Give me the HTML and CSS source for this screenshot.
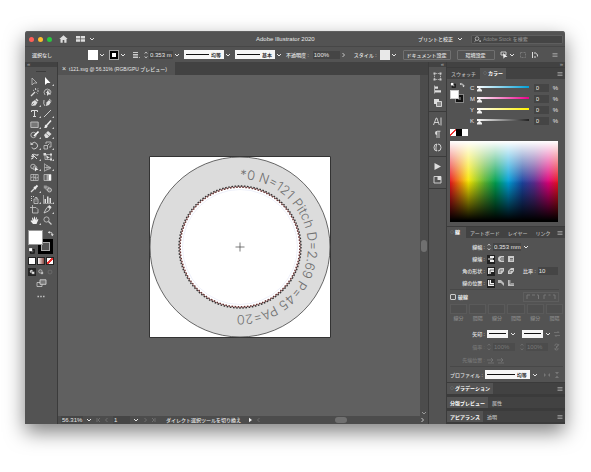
FILE: index.html
```html
<!DOCTYPE html>
<html lang="ja">
<head>
<meta charset="utf-8">
<title>Adobe Illustrator 2020</title>
<link rel="stylesheet" href="styles.css">
</head>
<body>
<svg class="defs" aria-hidden="true">
  <symbol id="chev" viewBox="0 0 6 6"><path d="M1 2l2 2 2-2" fill="none" stroke="currentColor"/></symbol>
  <symbol id="step" viewBox="0 0 4 8"><path d="M.7 2.6L2 1l1.300 1.600M.7 5.400L2 7l1.300-1.600" fill="none" stroke="currentColor" stroke-width=".7"/></symbol>
  <symbol id="menu" viewBox="0 0 6 6"><path d="M.5 1.500h5M.5 3h5M.5 4.500h5" stroke="currentColor" stroke-width=".7"/></symbol>
  <symbol id="prev" viewBox="0 0 5 6"><path d="M3.500 1L1.500 3l2 2" fill="none" stroke="currentColor" stroke-width=".8"/></symbol>
  <symbol id="next" viewBox="0 0 5 6"><path d="M1.500 1l2 2-2 2" fill="none" stroke="currentColor" stroke-width=".8"/></symbol>
  <symbol id="first" viewBox="0 0 5 6"><path d="M1 1v4M4 1L2 3l2 2" fill="none" stroke="currentColor" stroke-width=".8"/></symbol>
  <symbol id="last" viewBox="0 0 5 6"><path d="M4 1v4M1 1l2 2-2 2" fill="none" stroke="currentColor" stroke-width=".8"/></symbol>
  <symbol id="swap" viewBox="0 0 8 8"><path d="M3 1L1 2.700l2 1.700z" fill="currentColor"/><path d="M2 2.700h2q2 0 2 2.300" fill="none" stroke="currentColor"/><path d="M4.300 4.800h3.400L6 7z" fill="currentColor"/></symbol>
  <symbol id="default" viewBox="0 0 8 8"><rect x="3" y="3" width="4" height="4" fill="none" stroke="#111" stroke-width="1.300"/><rect x="1" y="1" width="4" height="4" fill="#fff" stroke="#222" stroke-width=".5"/></symbol>
  <symbol id="link" viewBox="0 0 6 8"><path d="M1 3V2q0-1 1.500-1T4 2v1M1 5v1q0 1 1.500 1T4 6V5M2.500 3v2M5 1L1 7" fill="none" stroke="currentColor" stroke-width=".8"/></symbol>
</svg>

<div class="window">
  <header class="titlebar">
    <div class="title-left">
      <span class="light close"></span><span class="light minimize"></span><span class="light maximize"></span>
      <button class="plain home" aria-label="ホーム"><svg viewBox="0 0 9 8"><path d="M4.500.3L.3 4h1.200v3.700h2.200V5h1.600v2.700h2.200V4h1.200z" fill="#ddd"/></svg></button>
      <button class="plain arrange" aria-label="ドキュメントの配置"><svg viewBox="0 0 9 6"><path d="M0 0h4v2.500H0zM0 3.200h4v2.600H0zM4.700 0H9v2.500H4.700zM4.700 3.200H9v2.600H4.700z" fill="#ddd"/></svg></button>
      <svg class="chev"><use href="#chev"/></svg>
    </div>
    <h1>Adobe Illustrator 2020</h1>
    <div class="title-right">
      <button class="plain">プリントと校正</button>
      <svg class="chev"><use href="#chev"/></svg>
      <label class="search">
        <svg viewBox="0 0 8 8"><circle cx="3.500" cy="3" r="2.100" fill="none" stroke="#ccc" stroke-width=".8"/><path d="M2 4.600L.5 7M6 5.500h2L7 6.700z" stroke="#ccc" stroke-width=".6" fill="#ccc"/></svg>
        <input type="search" aria-label="Adobe Stock を検索" placeholder="Adobe Stock を検索">
      </label>
    </div>
  </header>

  <div class="control">
    <span class="selection">選択なし</span>
    <div class="group">
      <button class="swatch white" aria-label="塗り"></button><svg class="chev"><use href="#chev"/></svg>
    </div>
    <div class="group">
      <button class="swatch ring" aria-label="線"></button><svg class="chev"><use href="#chev"/></svg>
    </div>
    <div class="group weight">
      <svg class="ico" viewBox="0 0 8 8"><path d="M1 1h5v1H1zM1 3h5v1.500H1zM1 5.500h5V7H1z" fill="#ccc"/><path d="M7 6.500h.8" stroke="#ccc"/></svg>
      <svg class="step"><use href="#step"/></svg>
      <input class="field wide" aria-label="線幅" value="0.353 m"><svg class="chev"><use href="#chev"/></svg>
    </div>
    <div class="group">
      <label class="line-select"><span class="line"></span><select aria-label="プロファイル"><option>均等</option></select></label><svg class="chev"><use href="#chev"/></svg>
    </div>
    <div class="group">
      <label class="line-select"><span class="line"></span><select aria-label="ブラシ"><option>基本</option></select></label><svg class="chev"><use href="#chev"/></svg>
    </div>
    <div class="group">
      <label for="opacity">不透明度 :</label><input class="field opacity" id="opacity" value="100%"><svg class="arrow"><use href="#next"/></svg>
    </div>
    <div class="group styles">
      <span>スタイル :</span><button class="swatch style" aria-label="スタイル"></button><svg class="chev"><use href="#chev"/></svg>
    </div>
    <div class="group actions">
      <button class="outlined">ドキュメント設定</button>
      <button class="outlined">環境設定</button>
    </div>
    <div class="group tail">
      <svg class="ico" viewBox="0 0 8 8"><path d="M1 1h5v3H1z" fill="none" stroke="#ccc"/><path d="M3 2l4.500 4H5L3.500 7.800z" fill="#eee"/></svg><svg class="chev"><use href="#chev"/></svg>
    </div>
    <svg class="ico dim" viewBox="0 0 8 8"><path d="M1.500 1.500h5v5h-5z" fill="none" stroke="currentColor" stroke-dasharray="2 1"/></svg>
    <svg class="ico" viewBox="0 0 8 8"><path d="M1.500 1v6M3 2h2M3 6h2" stroke="#ddd"/><path d="M5 2.500q2 .5 1.500 3" fill="none" stroke="#ddd"/></svg>
    <svg class="ico menu"><use href="#menu"/></svg>
  </div>

  <main class="work">
    <aside class="tools">
      <div class="strip left">«</div>
      <div class="grip"></div>
      <div class="tool-grid">
        <button class="plain" aria-label="選択"><svg viewBox="0 0 9 9"><path d="M2 1v7l2-2h3z" fill="none" stroke="#ccc" stroke-width=".7"/></svg></button>
        <button class="plain more" aria-label="ダイレクト選択"><svg viewBox="0 0 9 9"><path d="M2 0v8l2.300-2H7.500z" fill="#fff"/></svg></button>
        <button class="plain" aria-label="自動選択"><svg viewBox="0 0 9 9"><path d="M1 8l4-4" stroke="#ddd" stroke-width="1.300"/><path d="M5.500 0v2M7 3h2M7 1.500L8 .5M3 2l1 .7M6.500 4.500l1 1" stroke="#ddd" stroke-width=".8"/></svg></button>
        <button class="plain" aria-label="なげなわ"><svg viewBox="0 0 9 9"><path d="M2 7Q0 4 2 2t5 0q2 2 0 4M3 5q2-3 4-2" fill="none" stroke="#ccc" stroke-width=".8"/><path d="M4 2v6l1.500-1.500H8z" fill="#ddd"/></svg></button>
        <button class="plain more" aria-label="ペン"><svg viewBox="0 0 9 9"><path d="M1 8l1-4 3-2 2.500 2.500-2 3z" fill="#ddd"/><path d="M5.500 1.500l1-1 2 2-1 1z" fill="#ddd"/><path d="M1 8l3-3" stroke="#555" stroke-width=".6"/></svg></button>
        <button class="plain" aria-label="曲線"><svg viewBox="0 0 9 9"><path d="M3 8l.5-3.500L6 2l2 2-2 3z" fill="#ddd"/><path d="M1 2q-1 4 1 6M6 1l2.500 2" fill="none" stroke="#ddd" stroke-width=".8"/></svg></button>
        <button class="plain more" aria-label="文字"><svg viewBox="0 0 9 9"><path d="M1.500 3V1.500h6V3M4.500 1.500v6M3 7.500h3" fill="none" stroke="#ddd"/></svg></button>
        <button class="plain more" aria-label="直線"><svg viewBox="0 0 9 9"><path d="M1 8l7-7" stroke="#ccc"/></svg></button>
        <button class="plain more" aria-label="長方形"><svg viewBox="0 0 9 9"><path d="M.8 2h7.400v5.500H.8z" fill="#777" stroke="#ccc" stroke-width=".8"/></svg></button>
        <button class="plain more" aria-label="ブラシ"><svg viewBox="0 0 9 9"><path d="M8 .5L4 5" stroke="#eee" stroke-width="1.500"/><path d="M3 4.500q2 0 1.500 2T1 8q1-1 .8-2T3 4.500z" fill="#eee"/></svg></button>
        <button class="plain more" aria-label="Shaper"><svg viewBox="0 0 9 9"><circle cx="3.500" cy="5" r="2.700" fill="none" stroke="#ccc" stroke-width=".8"/><path d="M8.500 1.500L4 6" stroke="#fff" stroke-width="1.600"/></svg></button>
        <button class="plain more" aria-label="消しゴム"><svg viewBox="0 0 9 9"><path d="M1 5l4-4 3.500 3-4 4h-2z" fill="#ddd"/><path d="M2.800 3.200l3.500 3" stroke="#555" stroke-width=".6"/></svg></button>
        <button class="plain more" aria-label="回転"><svg viewBox="0 0 9 9"><path d="M2 2.500a3.200 3.200 0 1 1-.3 4" fill="none" stroke="#ccc"/><path d="M.5 1v3h3z" fill="#ccc"/></svg></button>
        <button class="plain more" aria-label="拡大・縮小"><svg viewBox="0 0 9 9"><path d="M1 4.500h3.500V8H1zM3 3V1h5v5H6M4.500 4.500l2-2" fill="none" stroke="#ccc" stroke-width=".8"/></svg></button>
        <button class="plain more" aria-label="線幅"><svg viewBox="0 0 9 9"><path d="M1 7q3 0 2-3T6 3q3 1 2-1M2 2l5 5M1 4l3 1" fill="none" stroke="#ddd"/></svg></button>
        <button class="plain more" aria-label="自由変形"><svg viewBox="0 0 9 9"><path d="M2 2.500h6v5H2z" fill="none" stroke="#ccc" stroke-width=".7"/><path d="M.5 1h2.500v2.500H.5zM7 1.500h2v2H7zM7 6.500h2v2H7zM3 3l4 3H5L4 7.500z" fill="#ddd"/></svg></button>
        <button class="plain more" aria-label="シェイプ形成"><svg viewBox="0 0 9 9"><circle cx="3" cy="3.500" r="2.300" fill="none" stroke="#ccc" stroke-width=".8"/><circle cx="5" cy="5" r="2" fill="#777" stroke="#ccc" stroke-width=".6"/><path d="M5 4v4.500L6.500 7h2z" fill="#eee"/></svg></button>
        <button class="plain more" aria-label="遠近グリッド"><svg viewBox="0 0 9 9"><path d="M1.500.5v8M4 2v5M6 3.500v3M1.500 1L8 5M1.500 4.500H8M1.500 8L8 5" fill="none" stroke="#bbb" stroke-width=".7"/></svg></button>
        <button class="plain" aria-label="メッシュ"><svg viewBox="0 0 9 9"><path d="M.8 1.500h7.400v6H.8zM1 4.500q2-1 3.500 0t3.500 0M3.500 1.500q1 3 0 6M6 1.500q-1 3 0 6" fill="none" stroke="#ccc" stroke-width=".7"/></svg></button>
        <button class="plain" aria-label="グラデーション"><svg viewBox="0 0 9 9"><path d="M1 1.500h2.500v6H1z" fill="#666"/><path d="M3.500 1.500H6v6H3.500z" fill="#aaa"/><path d="M6 1.500h2v6H6z" fill="#fff"/><path d="M1 1.500h7v6H1z" fill="none" stroke="#ddd" stroke-width=".6"/></svg></button>
        <button class="plain more" aria-label="スポイト"><svg viewBox="0 0 9 9"><path d="M1 8l4-4" stroke="#ddd" stroke-width="1.300"/><path d="M4 3l2 2M5.500 3.500L7.500 1.500" stroke="#eee" stroke-width="1.800"/></svg></button>
        <button class="plain" aria-label="ブレンド"><svg viewBox="0 0 9 9"><path d="M.8 1.500h3v3h-3z" fill="#999"/><circle cx="4.500" cy="4.500" r="1.800" fill="#777" stroke="#bbb" stroke-width=".6"/><circle cx="6.500" cy="6" r="2" fill="#777" stroke="#ddd" stroke-width=".7"/></svg></button>
        <button class="plain more" aria-label="シンボルスプレー"><svg viewBox="0 0 9 9"><path d="M4 4h4v4.500H4zM5 2.500h2V4" fill="none" stroke="#ccc" stroke-width=".8"/><path d="M1 1h1v1H1zM3 1h1v1H3zM1 3h1v1H1zM1 5h1v1H1zM5.500 5.500h1v1h-1z" fill="#ccc"/></svg></button>
        <button class="plain more" aria-label="グラフ"><svg viewBox="0 0 9 9"><path d="M.5 0v8.500H9" fill="none" stroke="#ccc" stroke-width=".6"/><path d="M1.500 4H3v4H1.500zM4 1.500h1.500V8H4zM6.500 3H8v5H6.500z" fill="#ddd"/></svg></button>
        <button class="plain" aria-label="アートボード"><svg viewBox="0 0 9 9"><path d="M2.500 0v2.500M0 2.500h6l2 2V8H2.500V2.500" fill="none" stroke="#ccc" stroke-width=".8"/></svg></button>
        <button class="plain more" aria-label="スライス"><svg viewBox="0 0 9 9"><path d="M1 8l2-4 3-3.500L8 2 5.500 6z" fill="none" stroke="#ddd" stroke-width=".8"/><path d="M4.500 2l2.500 2L8.500 2 6.500.5z" fill="#ddd"/></svg></button>
        <button class="plain more" aria-label="手のひら"><svg viewBox="0 0 9 9"><path d="M3 8L.5 5l.7-.7L2.500 5 2 1.700l.8-.2L3.800 4 4 .8h.8L5.200 4l1-2.700.8.200L6.500 4.500l1.200-1.500.7.500L6.500 8z" fill="#eee"/></svg></button>
        <button class="plain" aria-label="ズーム"><svg viewBox="0 0 9 9"><circle cx="3.500" cy="3.500" r="2.600" fill="none" stroke="#ccc" stroke-width=".8"/><path d="M5.500 5.500l3 3" stroke="#ccc" stroke-width="1.200"/></svg></button>
      </div>
      <div class="fill-stroke">
        <button class="plain big-stroke" aria-label="線の色"></button>
        <button class="plain big-fill" aria-label="塗りの色"></button>
        <button class="plain swap" aria-label="入れ替え"><svg><use href="#swap"/></svg></button>
        <button class="plain reset" aria-label="初期設定"><svg><use href="#default"/></svg></button>
      </div>
      <div class="modes">
        <button class="mode solid" aria-label="カラー"></button>
        <button class="mode grad" aria-label="グラデーション"></button>
        <button class="mode none" aria-label="なし"></button>
      </div>
      <div class="modes">
        <button class="mode on" aria-label="標準描画"><svg viewBox="0 0 7 7"><circle cx="2.800" cy="2.800" r="1.800" fill="#ccc"/><path d="M3 3h3.500v3H3z" fill="#eee" stroke="#222" stroke-width=".5"/></svg></button>
        <button class="mode" aria-label="背面描画"><svg viewBox="0 0 7 7"><path d="M3.500 3.500H6V6H3.500z" fill="#bbb"/><circle cx="2.800" cy="2.800" r="2" fill="#666" stroke="#ccc" stroke-width=".8"/></svg></button>
        <button class="mode" aria-label="内側描画"><svg viewBox="0 0 7 7"><circle cx="3.500" cy="3.500" r="2.300" fill="none" stroke="#777" stroke-width=".7"/></svg></button>
      </div>
      <button class="plain screen" aria-label="スクリーンモード"><svg viewBox="0 0 11 8"><path d="M1 3.500h5v4H1z" fill="none" stroke="#ccc" stroke-width=".8"/><path d="M4 .8h6v4.500H4z" fill="#777" stroke="#ddd" stroke-width=".8"/></svg></button>
      <button class="plain dots" aria-label="ツールバーを編集"><svg viewBox="0 0 8 3"><path d="M.5.8h1.400v1.400H.5zM3.300.8h1.400v1.400H3.300zM6.100.8h1.400v1.400H6.100z" fill="#ccc"/></svg></button>
    </aside>

    <section class="document">
      <div class="doc-tabs"><div class="doc-tab"><button class="plain" aria-label="閉じる">×</button><span>t121.svg @ 56.31% (RGB/GPU プレビュー)</span></div></div>
      <div class="view">
        <div class="canvas">
          <svg class="art" viewBox="0 0 182 182">
            <path d="M.5.5h181v181H.5z" fill="#fff" stroke="#333" stroke-width="1"/>
            <circle cx="91" cy="91" r="90" fill="#dcdcdc" stroke="#444" stroke-width=".8"/>
            <circle cx="91" cy="91" r="60.500" fill="#fff"/>
            <circle cx="91" cy="91" r="60.500" fill="none" stroke="#a77" stroke-width=".6"/>
            <circle class="teeth outer" cx="91" cy="91" r="61" pathLength="242"/>
            <circle class="teeth inner" cx="91" cy="91" r="59.800" pathLength="242"/>
            <circle cx="91" cy="91" r="57.500" fill="none" stroke="#e6eaf8" stroke-width=".7"/>
            <path d="M86.500 91h9M91 86.500v9" stroke="#444" stroke-width=".7"/>
            <path id="ring" d="M91 23a68 68 0 0 1 0 136a68 68 0 0 1-68-68" fill="none"/>
            <text class="engrave"><textPath href="#ring">*0 N=121 Pitch D=2.69 P=45 PA=20</textPath></text>
          </svg>
        </div>
        <div class="vscroll"><span></span><i class="thumb"></i><svg><use href="#chev"/></svg></div>
      </div>
      <footer class="status">
        <input class="field zoom" aria-label="ズーム" value="56.31%"><svg class="chev"><use href="#chev"/></svg>
        <div class="pager dim"><svg><use href="#first"/></svg><svg><use href="#prev"/></svg></div>
        <input class="field page" aria-label="アートボード" value="1"><svg class="chev"><use href="#chev"/></svg>
        <div class="pager dim"><svg><use href="#next"/></svg><svg><use href="#last"/></svg></div>
        <span class="hint">ダイレクト選択ツールを切り換え</span>
        <svg class="play" viewBox="0 0 5 6"><path d="M1 .8L4 3 1 5.200z" fill="#eee"/></svg>
        <svg class="play dim"><use href="#prev"/></svg>
        <div class="hscroll"><i></i></div>
        <svg class="play"><use href="#next"/></svg>
      </footer>
    </section>

    <nav class="dock">
      <div class="strip">«</div>
      <div class="dock-group">
        <button class="plain" aria-label="変形"><svg viewBox="0 0 9 9"><path d="M1.500 1.500h6v6h-6z" fill="none" stroke="#ccc" stroke-width=".8" stroke-dasharray="1 .7"/><path d="M.5.5h2v2h-2zM6.500.5h2v2h-2zM.5 6.500h2v2h-2zM6.500 6.500h2v2h-2z" fill="#ccc"/></svg></button>
        <button class="plain" aria-label="整列"><svg viewBox="0 0 9 9"><path d="M1.500.5v8" stroke="#ccc" stroke-width=".8"/><path d="M2 1.500h3v2.300H2zM2 5.200h6v2.300H2z" fill="#ddd"/></svg></button>
        <button class="plain" aria-label="パスファインダー"><svg viewBox="0 0 9 9"><path d="M1 1h5v5H1z" fill="#ddd"/><path d="M3.500 3.500h5v5h-5z" fill="#888" stroke="#eee" stroke-width=".8"/></svg></button>
      </div>
      <div class="dock-group">
        <button class="plain" aria-label="文字"><svg viewBox="0 0 9 9"><path d="M.5 8L3.200 1h.6L6.300 8M1.500 5.500h4M8 .5v8" fill="none" stroke="#ddd" stroke-width=".9"/></svg></button>
        <button class="plain" aria-label="段落"><svg viewBox="0 0 9 9"><path d="M4 5a2 2 0 0 1 0-4z" fill="#ddd"/><path d="M7.500 1.200H4V8M6 1v7" fill="none" stroke="#ddd" stroke-width=".8"/></svg></button>
        <button class="plain" aria-label="OpenType"><svg viewBox="0 0 9 9"><path d="M4 1Q1 1 1 4.500T4 8Q2.500 6.500 3 4T4 1zM5 1q3 0 3 3.500T5 8" fill="none" stroke="#ddd" stroke-width=".9"/></svg></button>
      </div>
      <div class="dock-group">
        <button class="plain" aria-label="アクション"><svg viewBox="0 0 9 9"><path d="M1.500 1L8 4.500 1.500 8z" fill="#ddd"/></svg></button>
        <button class="plain" aria-label="書き出し"><svg viewBox="0 0 9 9"><path d="M1 1.500h7V8H1z" fill="none" stroke="#ccc"/><path d="M4.500 1v4H8V1z" fill="#ddd"/></svg></button>
      </div>
    </nav>

    <aside class="panels">
      <div class="strip right">»</div>
      <div class="tabs"><button class="tab">スウォッチ</button><button class="tab on"><small>◇</small>カラー</button><svg class="menu"><use href="#menu"/></svg></div>
      <section class="color">
        <div class="mixer">
          <div class="mini">
            <svg class="mini-def"><use href="#default"/></svg><svg class="mini-swap"><use href="#swap"/></svg>
            <span class="mini-stroke"></span><span class="mini-fill"></span>
          </div>
          <div class="rows">
            <div class="cmyk cyan"><label for="c">C</label><input type="range" aria-label="C" value="0"><input class="field" id="c" value="0"><span>%</span></div>
            <div class="cmyk magenta"><label for="m">M</label><input type="range" aria-label="M" value="0"><input class="field" id="m" value="0"><span>%</span></div>
            <div class="cmyk yellow"><label for="y">Y</label><input type="range" aria-label="Y" value="0"><input class="field" id="y" value="0"><span>%</span></div>
            <div class="cmyk black"><label for="k">K</label><input type="range" aria-label="K" value="0"><input class="field" id="k" value="0"><span>%</span></div>
          </div>
        </div>
        <div class="chips"><button class="chip none" aria-label="なし"></button><button class="chip blk" aria-label="ブラック"></button><button class="chip wht" aria-label="ホワイト"></button></div>
        <div class="spectrum"></div>
      </section>

      <div class="tabs stroke-tabs"><button class="tab on"><small>◇</small>線</button><button class="tab">アートボード</button><button class="tab">レイヤー</button><button class="tab">リンク</button><svg class="menu"><use href="#menu"/></svg></div>
      <section class="stroke">
        <div class="row"><label for="w">線幅 :</label><svg class="step"><use href="#step"/></svg><input class="field mm" id="w" value="0.353 mm"><svg class="chev"><use href="#chev"/></svg></div>
        <div class="row"><span class="label">線端 :</span>
          <button class="opt on" aria-label="線端なし"><svg viewBox="0 0 8 8"><path d="M3 1h4v2H3zM3 5h4v2H3zM1 3.500h5v1H1z" fill="#eee"/></svg></button>
          <button class="opt" aria-label="丸型線端"><svg viewBox="0 0 8 8"><path d="M7 1H4a3 3 0 0 0 0 6h3V5.500H4v-3h3zM3 3.500h4v1H3z" fill="#ccc"/></svg></button>
          <button class="opt" aria-label="突出線端"><svg viewBox="0 0 8 8"><path d="M1 1h6v6H1z" fill="#ccc"/><path d="M3 3.500h3M3 5h3" stroke="#555" stroke-width=".8"/></svg></button></div>
        <div class="row"><span class="label">角の形状 :</span>
          <button class="opt on" aria-label="マイター結合"><svg viewBox="0 0 8 8"><path d="M1 1h6v4H4v2H1z" fill="#eee"/><path d="M3 7V3h4" fill="none" stroke="#333" stroke-width=".7"/></svg></button>
          <button class="opt" aria-label="ラウンド結合"><svg viewBox="0 0 8 8"><path d="M1 7V4q0-3 3-3h3v3L4.500 7z" fill="#ccc"/><path d="M3 6V3h3" fill="none" stroke="#555" stroke-width=".7"/></svg></button>
          <button class="opt" aria-label="ベベル結合"><svg viewBox="0 0 8 8"><path d="M1 7V4l3-3h3v3L4.500 7z" fill="#ccc"/><path d="M3 6V3.500h3" fill="none" stroke="#555" stroke-width=".7"/></svg></button>
          <label class="ratio" for="ratio">比率 :</label><input class="field ten" id="ratio" value="10"></div>
        <div class="row"><span class="label">線の位置 :</span>
          <button class="opt on" aria-label="中央"><svg viewBox="0 0 8 8"><path d="M1 1h3v3h3v3H1z" fill="#eee"/><path d="M2.500 1v4.500H7" fill="none" stroke="#333" stroke-width=".6"/></svg></button>
          <button class="opt" aria-label="内側"><svg viewBox="0 0 8 8"><path d="M1 1h3l3 3v3L4 4H1z" fill="#bbb"/></svg></button>
          <button class="opt" aria-label="外側"><svg viewBox="0 0 8 8"><path d="M1 1h2.500v3H7v3H1z" fill="#bbb"/><path d="M3 1v4h4" fill="none" stroke="#555" stroke-width=".6"/></svg></button></div>
        <div class="dash-head"><label><input type="checkbox">破線</label>
          <span class="dash-style"><svg viewBox="0 0 34 8"><path d="M3 6V2h3M8 2h3M13 2h1.500v4M20 6V2h2M24.500 2h2M29 2h2v4" fill="none" stroke="currentColor"/></svg></span></div>
        <div class="dashes">
          <label><input disabled>線分</label><label><input disabled>間隔</label><label><input disabled>線分</label><label><input disabled>間隔</label><label><input disabled>線分</label><label><input disabled>間隔</label>
        </div>
        <div class="row tall"><span class="label">矢印 :</span>
          <button class="arrowhead" aria-label="始点の矢印"></button><svg class="chev"><use href="#chev"/></svg>
          <button class="arrowhead second" aria-label="終点の矢印"></button><svg class="chev"><use href="#chev"/></svg>
          <svg class="end dim" viewBox="0 0 6 8"><path d="M0 2.500h5L3.500 1M6 5.500H1L2.500 7" fill="none" stroke="currentColor" stroke-width=".8"/></svg></div>
        <div class="row tall dim"><label for="s1">倍率 :</label><svg class="step"><use href="#step"/></svg><input class="field pct" id="s1" value="100%" disabled><svg class="step"><use href="#step"/></svg><input class="field pct" aria-label="終点の倍率" value="100%" disabled><svg class="end"><use href="#link"/></svg></div>
        <div class="row tall dim"><span class="label">先端位置 :</span>
          <button class="opt" aria-label="先端の外"><svg viewBox="0 0 8 8"><path d="M0 4h6M4 2l2 2-2 2M1 7h6" fill="none" stroke="currentColor" stroke-width=".8"/></svg></button>
          <button class="opt" aria-label="先端に合わせる"><svg viewBox="0 0 8 8"><path d="M0 4h6M4 2l2 2-2 2M1 7h6" fill="none" stroke="currentColor" stroke-width=".8"/></svg></button></div>
        <div class="profile"><span>プロファイル :</span><label class="line-select"><span class="line"></span><select aria-label="プロファイル"><option>均等</option></select></label><svg class="chev"><use href="#chev"/></svg>
          <svg class="flip dim" viewBox="0 0 8 8"><path d="M1 2v4l2-2zM7 2v4L5 4z" fill="currentColor"/></svg><svg class="end dim" viewBox="0 0 6 8"><path d="M1 1h4L3 3.500zM1 7h4L3 4.500z" fill="currentColor"/></svg></div>
      </section>
      <div class="tabs closed"><button class="tab on"><small>◇</small>グラデーション</button><svg class="menu"><use href="#menu"/></svg></div>
      <div class="tabs closed"><button class="tab on">分版プレビュー</button><button class="tab">属性</button></div>
      <div class="tabs closed"><button class="tab on">アピアランス</button><button class="tab">透明</button><svg class="menu"><use href="#menu"/></svg></div>
    </aside>
  </main>
</div>
</body>
</html>
```
FILE: styles.css
```css
* { box-sizing: border-box; }

:root {
  --panel: #535353;
  --dark: #424242;
  --edge: #3b3b3b;
  --text: #e6e6e6;
  --muted: #777;
}

body {
  margin: 0;
  min-height: 100vh;
  display: flex;
  padding: 31px 26px 48px 25px;
  background: #fff;
  color: var(--text);
  font: 500 5px/8px "Liberation Sans", "Noto Sans CJK JP", sans-serif;
  white-space: nowrap;
}

button, input, select { font: inherit; color: inherit; margin: 0; padding: 0; border: 0; border-radius: 0; }
svg { display: block; flex: none; }
.defs { position: absolute; width: 0; height: 0; }
.plain { background: none; display: flex; align-items: center; justify-content: center; }
.dim { color: var(--muted); }
.chev { width: 6px; height: 6px; }
.step { width: 4px; height: 8px; }
.ico { width: 8px; height: 8px; }
.menu { width: 6px; height: 6px; color: #aaa; }

.window {
  flex: 1;
  min-width: 0;
  display: flex;
  flex-direction: column;
  background: var(--panel);
  border-radius: 3px 3px 0 0;
  box-shadow: 0 8px 20px rgba(0, 0, 0, .5);
}

/* Title bar */
.titlebar {
  display: grid;
  grid-template-columns: 12fr auto 13fr;
  align-items: center;
  height: 15px;
  border-top: 1px solid #606060;
  border-radius: 3px 3px 0 0;
}
.titlebar h1 { margin: 0; font-size: 6px; font-weight: 400; }
.title-left, .title-right { display: flex; align-items: center; }
.title-left { padding-left: 4px; gap: 4px; }
.title-right { justify-content: flex-end; padding-right: 2px; gap: 4px; }
.light { width: 5px; height: 5px; border-radius: 50%; }
.close { background: #ff5f57; }
.minimize { background: #febc2e; }
.maximize { background: #28c840; }
.home { margin-left: 3px; }
.home svg { width: 9px; height: 8px; }
.arrange { margin-left: 4px; }
.arrange svg { width: 9px; height: 6px; }
.search {
  display: flex;
  align-items: center;
  gap: 2px;
  width: 92px;
  height: 9px;
  margin-left: 4px;
  padding-left: 2px;
  border: 1px solid #5e5e5e;
  border-radius: 1px;
  background: #454545;
}
.search svg { width: 7px; height: 7px; }
.search input { flex: 1; min-width: 0; height: 7px; background: none; appearance: none; }
.search input::placeholder { color: #8d8d8d; opacity: 1; }

/* Control bar */
.control {
  display: flex;
  align-items: center;
  gap: 4px;
  height: 16px;
  padding: 0 7px;
  border-top: 1px solid #474747;
}
.selection { width: 52px; }
.group { display: flex; align-items: center; gap: 1px; }
.swatch { width: 10px; height: 10px; }
.white { background: #fff; }
.style { background: #e8e8e8; margin-left: 2px; }
.ring { background: #fff; border: 3px solid #000; outline: 1px solid #aaa; outline-offset: -1px; }
.weight { margin-left: 2px; }
.weight .step { margin-left: 3px; }
.field { height: 8px; padding-left: 1px; background: #454545; font-size: 6px; }
.wide { width: 24px; }
.opacity { width: 27px; margin-left: 3px; }
.arrow { width: 5px; height: 6px; }
.styles { margin-left: 4px; }
.line-select {
  display: flex;
  align-items: center;
  justify-content: space-between;
  width: 40px;
  height: 9px;
  padding: 0 2px;
  background: #f6f6f6;
  color: #222;
}
.line { flex: 1; height: 1px; background: #111; margin-right: 2px; }
.line-select select { appearance: none; background: none; height: 8px; line-height: 8px; }
.actions { gap: 6px; margin-left: 2px; }
.outlined {
  min-width: 38px;
  height: 10px;
  padding: 0 3px;
  border: 1px solid #707070;
  border-radius: 1px;
  background: none;
  line-height: 8px;
}
.tail { margin-left: 1px; }
.control > .menu { width: 6px; margin-left: auto; }

/* Workspace */
.work {
  flex: 1;
  min-height: 0;
  display: grid;
  grid-template-columns: 32px minmax(0, 1fr) 17px 118px;
  column-gap: 1px;
  background: var(--edge);
}
.strip { height: 5px; padding: 0 2px; background: var(--dark); color: #aaa; font-size: 6px; line-height: 4px; text-align: right; }
.strip.left { text-align: left; }

/* Tools */
.tools { background: var(--panel); }
.grip { width: 10px; height: 1px; margin: 4px auto; background: #3c3c3c; }
.tool-grid {
  display: grid;
  grid-template: repeat(14, 1fr) / 13px 13px;
  justify-content: center;
  height: 150px;
}
.tool-grid button { position: relative; }
.tool-grid svg { width: 9px; height: 9px; }
.more::after {
  content: "";
  position: absolute;
  right: 0;
  bottom: 1px;
  border: 1px solid transparent;
  border-right-color: #ccc;
  border-bottom-color: #ccc;
}
.fill-stroke { position: relative; width: 26px; height: 25px; margin: 4px auto 2px; }
.fill-stroke button { position: absolute; }
.fill-stroke svg { width: 7px; height: 7px; }
.big-fill { left: 0; top: 0; width: 15px; height: 15px; background: #fff; outline: 1px solid #999; outline-offset: -1px; }
.big-stroke { right: 1px; bottom: 1px; width: 15px; height: 15px; border: 4px solid #000; background: var(--panel); outline: 1px solid #aaa; outline-offset: -4px; }
.swap { right: 0; top: 0; }
.reset { left: 0; bottom: 1px; }
.modes { display: flex; justify-content: center; gap: 1px; margin-bottom: 3px; }
.mode { width: 8px; height: 8px; background: none; border: 1px solid transparent; }
.mode svg { width: 6px; height: 6px; }
.mode.solid { background: #fff; border-color: #222; }
.mode.grad { background: linear-gradient(90deg, #fff, #8a4a44); border-color: #222; }
.mode.none { border-color: #222; }
.none { background: linear-gradient(135deg, #fff 40%, #e33 40%, #e33 60%, #fff 60%); }
.mode.on { background: #252525; }
.screen { margin: 3px auto 0; }
.screen svg { width: 11px; height: 8px; }
.dots { margin: 8px auto 0; }
.dots svg { width: 8px; height: 3px; }

/* Document */
.document { display: flex; flex-direction: column; min-width: 0; }
.doc-tabs { display: flex; height: 13px; background: var(--dark); }
.doc-tab { display: flex; align-items: center; gap: 3px; padding: 0 8px 0 4px; background: var(--panel); }
.doc-tab button { font-size: 7px; }
.view { flex: 1; display: flex; min-height: 0; }
.canvas { flex: 1; display: flex; align-items: center; justify-content: center; padding: 2px 0 0 2px; background: #606060; }
.art { width: 182px; height: 182px; }
.teeth { fill: none; stroke-width: 1.400px; stroke-dasharray: 1 1; }
.teeth.outer { stroke: #333; }
.teeth.inner { stroke: #633; stroke-dashoffset: 1; }
.engrave { font: 300 13px Inter, "Liberation Sans", sans-serif; fill: #707070; }
.vscroll { display: flex; flex-direction: column; align-items: center; justify-content: space-between; width: 8px; background: #4c4c4c; }
.vscroll span { height: 6px; }
.vscroll svg { width: 6px; height: 6px; color: #999; }
.thumb { width: 6px; height: 12px; border-radius: 3px; background: #707070; }
.status { display: flex; align-items: center; gap: 3px; height: 8px; padding: 0 3px; background: #4c4c4c; }
.zoom { width: 22px; }
.page { width: 17px; }
.pager { display: flex; gap: 3px; padding: 0 1px; }
.pager svg, .play { width: 5px; height: 6px; }
.hint { margin: 0 4px 0 6px; }
.hscroll { flex: 1; display: flex; justify-content: center; }
.hscroll i { width: 12px; height: 6px; border-radius: 3px; background: #707070; }

/* Dock */
.dock { background: var(--panel); }
.dock-group { display: flex; flex-direction: column; align-items: center; gap: 4px; padding: 5px 0 4px; border-bottom: 1px solid var(--edge); }
.dock-group svg { width: 9px; height: 9px; }

/* Panels */
.panels { background: var(--panel); min-width: 0; }
.tabs { display: flex; align-items: center; height: 12px; padding-right: 2px; background: var(--dark); border-top: 1px solid var(--edge); }
.tab { height: 100%; padding: 0 4px; background: none; color: #bbb; }
.tab.on { padding: 0 3px; background: var(--panel); color: #fff; font-weight: 700; }
.tab small { margin-right: 1px; font-size: 4px; color: #999; }
.tabs .menu { margin-left: auto; }
.color { padding: 3px 7px 4px 3px; }
.mixer { display: flex; }
.mini { position: relative; width: 20px; }
.mini > * { position: absolute; }
.mini svg { width: 6px; height: 6px; top: 0; }
.mini-def { left: 0; }
.mini-swap { left: 9px; }
.mini-stroke { left: 6px; top: 13px; width: 7px; height: 7px; border: 2px solid #111; outline: 1px solid #888; }
.mini-fill { left: 0; top: 8px; width: 9px; height: 9px; background: #fff; border: 1px solid #ccc; }
.rows { flex: 1; min-width: 0; }
.cmyk { display: flex; align-items: center; height: 11px; font-size: 6px; }
.cmyk label { width: 7px; }
.cmyk .field { width: 15px; margin: 0 4px 0 5px; padding-left: 2px; }
.cmyk input[type="range"] {
  flex: 1;
  min-width: 0;
  height: 8px;
  appearance: none;
  background: linear-gradient(90deg, #fff, var(--ink)) no-repeat 0 2px / 100% 2px;
}
.cmyk input::-webkit-slider-thumb { appearance: none; width: 5px; height: 4px; margin-top: 4px; background: #eee; clip-path: polygon(50% 0, 100% 60%, 100% 100%, 0 100%, 0 60%); }
.cyan { --ink: #00a0d8; }
.magenta { --ink: #ec008c; }
.yellow { --ink: #fff200; }
.black { --ink: #222; }
.chips { display: flex; margin: 3px 0 5px; }
.chip { width: 6px; height: 7px; }
.blk { background: #000; }
.wht { background: #fff; }
.spectrum {
  height: 81px;
  background:
    linear-gradient(#fff, rgba(255, 255, 255, 0) 52%),
    linear-gradient(rgba(0, 0, 0, 0) 48%, #000 98%),
    linear-gradient(90deg, #e8141c, #f8e800 17%, #5cb531 32%, #00a050 42%, #00a0d8 54%, #1b45a0 67%, #5c2d91 78%, #e0007a 91%, #e8141c);
}
.stroke-tabs .tab.on { padding: 0 6px 0 3px; }
.stroke { padding: 3px 2px 0 3px; }
.row { display: flex; align-items: center; gap: 2px; height: 12px; }
.row.tall { height: 13px; }
.row > :first-child { width: 35px; text-align: right; }
.row .opt { width: 8px; height: 9px; padding: 0; background: none; }
.row .opt.on { background: #222; }
.row .opt svg { width: 8px; height: 8px; }
.mm { width: 28px; }
.ratio { margin-left: 6px; }
.ten { width: 20px; }
.dash-head { display: flex; align-items: center; justify-content: space-between; height: 14px; margin-right: 4px; border-top: 1px solid #484848; }
.dash-head label { display: flex; align-items: center; gap: 2px; font-weight: 700; }
.dash-head input { appearance: none; width: 6px; height: 6px; border: 1px solid #ccc; border-radius: 1px; }
.dash-style { border: 1px solid #5e5e5e; color: #777; }
.dash-style svg { width: 34px; height: 8px; }
.dashes { display: grid; grid-template-columns: repeat(6, 1fr); gap: 2px; margin: 1px 0 4px; color: #888; text-align: center; }
.dashes input { display: block; width: 100%; height: 10px; background: #4f4f4f; border: 1px solid #5a5a5a; }
.dashes label { height: 19px; }
.arrowhead { width: 21px; height: 8px; background: linear-gradient(#111, #111) center / 17px 1px no-repeat #f6f6f6; }
.second { margin-left: 4px; }
.end { width: 6px; height: 8px; margin: 0 3px 0 auto; }
.row.dim .field { background: #4c4c4c; color: #777; }
.pct { width: 22px; margin-right: 3px; }
.profile { display: flex; align-items: center; gap: 2px; height: 16px; border-top: 1px solid #484848; }
.profile .line-select { width: 45px; }
.flip { width: 8px; height: 8px; margin-left: 3px; }
.closed { height: 14px; border-bottom: 2px solid var(--edge); }
```
